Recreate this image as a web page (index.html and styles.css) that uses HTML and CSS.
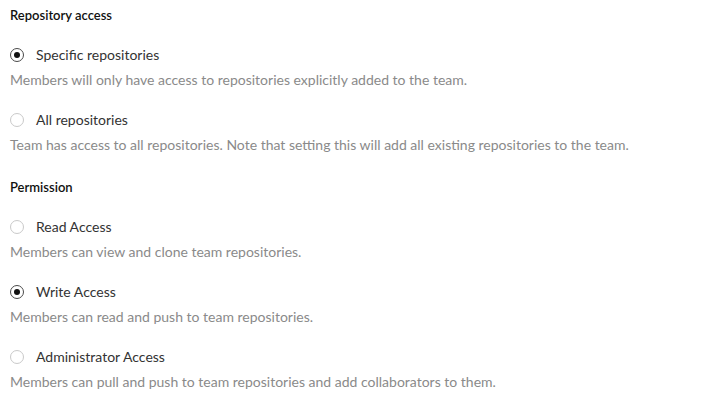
FILE: index.html
```html
<!DOCTYPE html>
<html>
<head>
<meta charset="utf-8">
<link rel="stylesheet" href="styles.css">
</head>
<body>
<div class="form">
  <div class="section">
    <div class="heading">Repository access</div>
    <div class="option">
      <div class="row"><span class="radio checked"></span><span class="label">Specific repositories</span></div>
      <div class="desc">Members will only have access to repositories explicitly added to the team.</div>
    </div>
    <div class="option">
      <div class="row"><span class="radio"></span><span class="label">All repositories</span></div>
      <div class="desc">Team has access to all repositories. Note that setting this will add all existing repositories to the team.</div>
    </div>
  </div>
  <div class="section">
    <div class="heading">Permission</div>
    <div class="option">
      <div class="row"><span class="radio"></span><span class="label">Read Access</span></div>
      <div class="desc">Members can view and clone team repositories.</div>
    </div>
    <div class="option">
      <div class="row"><span class="radio checked"></span><span class="label">Write Access</span></div>
      <div class="desc">Members can read and push to team repositories.</div>
    </div>
    <div class="option">
      <div class="row"><span class="radio"></span><span class="label">Administrator Access</span></div>
      <div class="desc">Members can pull and push to team repositories and add collaborators to them.</div>
    </div>
  </div>
</div>
</body>
</html>
```
FILE: styles.css
```css
html, body {
  margin: 0;
  padding: 0;
  background: #fff;
}
body {
  font-family: Lato, "Open Sans", sans-serif;
  color: #333;
}
.form {
  padding: 6px 10px 0 10px;
}
.heading {
  font-size: 13px;
  font-weight: 600;
  color: #111;
  line-height: 18px;
  height: 18px;
}
.section + .section {
  margin-top: 24px;
}
.option {
  margin-top: 22px;
}
.row {
  display: flex;
  align-items: center;
  height: 18px;
}
.radio {
  box-sizing: border-box;
  width: 14px;
  height: 14px;
  border-radius: 50%;
  border: 1px solid #c9c9c9;
  display: flex;
  align-items: center;
  justify-content: center;
  margin-right: 12px;
  flex: none;
}
.radio.checked {
  border-color: #4a4a4a;
}
.radio.checked::after {
  content: "";
  width: 6px;
  height: 6px;
  border-radius: 50%;
  background: #111;
}
.label {
  font-size: 14px;
  color: #333;
  line-height: 18px;
}
.desc {
  margin-top: 7px;
  font-size: 14px;
  color: #8a8a8a;
  line-height: 18px;
}
```
